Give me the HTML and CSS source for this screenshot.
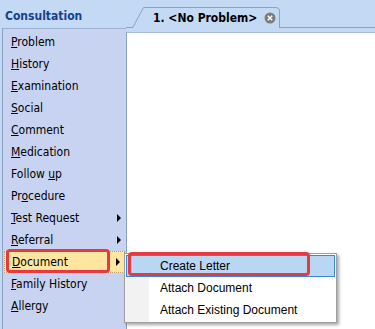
FILE: index.html
```html
<!DOCTYPE html>
<html lang="en">
<head>
  <meta charset="UTF-8" />
  <meta name="viewport" content="width=device-width, initial-scale=1.0" />
  <title>Consultation</title>
  <link rel="stylesheet" href="styles.css">
</head>
<body>
  <div class="app">
    <!-- left: consultation menu -->
    <aside class="side">
      <div class="side-title">Consultation</div>
      <ul class="side-list">
        <li><span><u>P</u>roblem</span></li>
        <li><span><u>H</u>istory</span></li>
        <li><span><u>E</u>xamination</span></li>
        <li><span><u>S</u>ocial</span></li>
        <li><span><u>C</u>omment</span></li>
        <li><span><u>M</u>edication</span></li>
        <li><span>Follow <u>u</u>p</span></li>
        <li><span>Pr<u>o</u>cedure</span></li>
        <li class="sub"><span><u>T</u>est Request</span></li>
        <li class="sub"><span><u>R</u>eferral</span></li>
        <li class="sub hot"><span><u>D</u>ocument</span><span class="mark mark-doc"></span></li>
        <li><span><u>F</u>amily History</span></li>
        <li><span><u>A</u>llergy</span></li>
      </ul>
    </aside>

    <!-- right: open problem tab -->
    <main class="work">
      <div class="tabs">
        <div class="tab">
          <svg class="tab-shape" width="148" height="21" viewBox="0 0 148 21">
            <path d="M0.5 21 L11.5 0.5 H144 Q147.5 0.5 147.5 4 V21" fill="#c4daf4" stroke="#8ba1c6" />
          </svg>
          <span class="tab-label">1. &lt;No Problem&gt;</span>
          <svg class="tab-close" width="12" height="12" viewBox="0 0 12 12">
            <circle cx="6" cy="6" r="5.5" fill="#7b7b7b" />
            <path d="M3.8 3.8 L8.2 8.2 M8.2 3.8 L3.8 8.2" stroke="#fff" stroke-width="1.6" />
          </svg>
        </div>
      </div>
      <div class="tab-band"></div>
      <div class="doc"></div>
    </main>

    <!-- Document submenu -->
    <div class="popup">
      <div class="popup-item on">Create Letter</div>
      <div class="popup-item">Attach Document</div>
      <div class="popup-item">Attach Existing Document</div>
    </div>
    <span class="mark mark-letter"></span>
  </div>
</body>
</html>
```

FILE: styles.css
```css
:root {
  --head-bg: #c4daf4;
  --side-bg: #c7d3f1;
  --line: #8ba1c6;
  --red: #e73940;
}

* { box-sizing: border-box; margin: 0; padding: 0; }
body {
  font-family: "DejaVu Sans Condensed", "DejaVu Sans", sans-serif;
  font-stretch: condensed;
  font-size: 12px;
  background: var(--head-bg);
  color: #000;
}

.app {
  position: relative;
  display: grid;
  grid-template-columns: 126px 1fr;
  height: 329px;
  overflow: hidden;
}

/* sidebar */
.side { display: flex; flex-direction: column; }
.side-title {
  height: 28px;
  padding: 9px 0 0 5px;
  line-height: 15px;
  font-weight: bold;
  color: #15428b;
}
.side-list {
  flex: 1;
  list-style: none;
  margin-left: 2px;
  padding-top: 2px;
  background: var(--side-bg);
  border-left: 1px solid var(--line);
  border-top: 1px solid #9fb2d3;
}
.side-list li {
  position: relative;
  display: flex;
  align-items: center;
  height: 22px;
  padding-left: 8px;
  padding-right: 5px;
}
.side-list li.sub::after {
  content: "";
  margin-left: auto;
  border-left: 4px solid #000;
  border-top: 4px solid transparent;
  border-bottom: 4px solid transparent;
}
.side-list li.hot {
  margin: 0 1px;
  padding-left: 7px;
  padding-right: 4px;
  background: #ffe6a0;
  border: 1px dotted #b9a56d;
}

/* annotation boxes */
.mark {
  position: absolute;
  border: 3px solid var(--red);
  border-radius: 4px;
}
.mark-doc { left: 1px; top: -3px; width: 104px; height: 24px; }
.mark-letter { left: 128px; top: 252px; width: 182px; height: 24px; }

/* work area */
.work { display: flex; flex-direction: column; }
.tabs {
  height: 28px;
  border-bottom: 1px solid var(--line);
  display: flex;
}
.tab {
  position: relative;
  display: flex;
  align-items: center;
  gap: 7px;
  width: 148px;
  height: 21px;
  margin: 7px 0 -1px 6px;
  padding-left: 21px;
  font-weight: bold;
}
.tab-shape { position: absolute; left: 0; top: 0; }
.tab-label, .tab-close { position: relative; }
.tab-band { height: 4px; }
.doc {
  flex: 1;
  background: #fff;
  border-left: 1px solid var(--line);
  border-top: 1px solid #a8bcda;
}

/* popup menu */
.popup {
  position: absolute;
  left: 124px;
  top: 253px;
  width: 213px;
  padding: 1px;
  background: linear-gradient(to right, #f2f2f2 24px, #fff 24px);
  border: 1px solid #a0a0a0;
  box-shadow: 2px 2px 3px rgba(0, 0, 0, 0.35);
  font-family: "Liberation Sans", Arial, sans-serif;
  font-stretch: normal;
}
.popup-item {
  height: 22px;
  line-height: 20px;
  padding-left: 33px;
  border: 1px solid transparent;
}
.popup-item.on {
  background: #b9d6f3;
  border-color: #3a88d8;
}
```
